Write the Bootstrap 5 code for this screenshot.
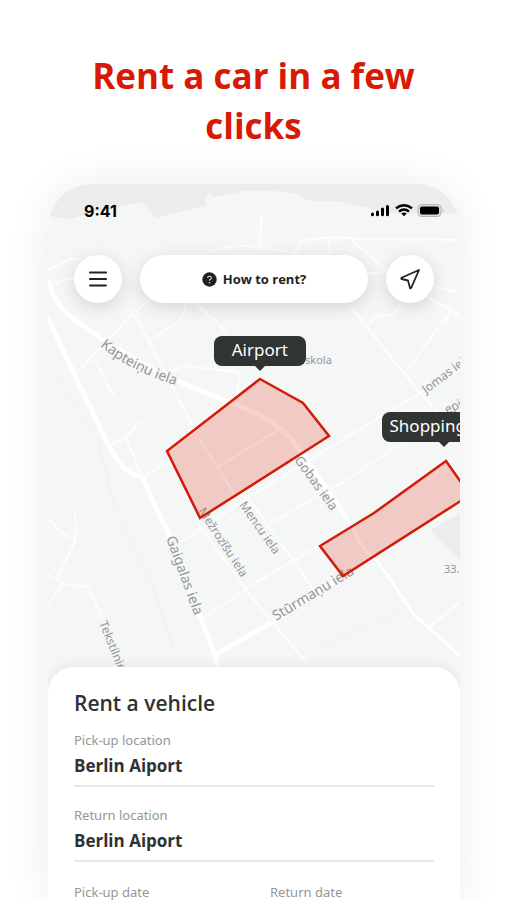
<!DOCTYPE html>
<html lang="en">
<head>
<meta charset="utf-8">
<meta name="viewport" content="width=device-width, initial-scale=1">
<title>Rent a car in a few clicks</title>
<link href="https://cdn.jsdelivr.net/npm/bootstrap@5.3.0/dist/css/bootstrap.min.css" rel="stylesheet">
<style>
  body { font-family: Lato, "Noto Sans", sans-serif; color: #2f3133; background: #fff; }
  .promo { padding: 51px 80px 33px; }
  .promo-title { color: #d71a05; font-family: "Open Sans", sans-serif; font-size: 35px; line-height: 50px; font-weight: 700; }
  .stage { padding: 0 47px 0 48px; }
  .phone { border-radius: 44px 44px 0 0; box-shadow: 0 0 44px rgba(0,0,0,.08); }
  .screen { border-radius: 44px 44px 0 0; }
  .map-area { height: 483px; }
  .map-art { top: 0; left: 0; width: 100%; height: 516px; }
  .status { padding: 16px 16px 0 36px; height: 38px; font: 700 16px/22px Inter, sans-serif; color: #000; }
  .tools { padding: 33px 26px 0; gap: 18px; }
  .float-btn { background: #fff; height: 48px; border: 0; color: #222; box-shadow: 0 4px 18px rgba(0,0,0,.14); }
  .float-btn:hover { background: #f7f7f7; }
  .round-btn { width: 48px; flex: none; }
  .help-btn { font: 700 13px/20px "Open Sans", sans-serif; gap: 6px; }
  .pin { background: #303433; color: #fff; height: 30px; line-height: 28px; border-radius: 8px; font-size: 17px; font-family: "Noto Sans", sans-serif; transform: translateX(-50%); padding: 0 8px; white-space: nowrap; }
  .pin::after { content: ""; position: absolute; left: 50%; top: 100%; margin-left: -5px; border: 5px solid transparent; border-top-color: #303433; border-bottom: 0; }
  .pin-airport { left: 51.4%; top: 152px; width: 92px; text-align: center; }
  .pin-shopping { left: 96%; top: 228px; width: 124px; }
  .sheet { border-radius: 26px 26px 0 0; padding: 22px 26px 0; box-shadow: 0 -2px 12px rgba(0,0,0,.07); background: #fff; }
  .sheet-title { font: 600 21px/28px "Open Sans", sans-serif; margin-bottom: 13px; }
  .field-label { font: 400 13px/20px "Noto Sans", sans-serif; color: #92959b; }
  .field-value { font: 700 17px/24px "Open Sans", sans-serif; color: #2f3133; border: 0; border-bottom: 2px solid #e6e7e7; border-radius: 0; padding: 4px 0 7px; }
  .field { margin-bottom: 18px; }
  .date-row { gap: 32px; padding-top: 2px; }
</style>
<script src="https://cdn.jsdelivr.net/npm/bootstrap@5.3.0/dist/js/bootstrap.bundle.min.js"></script>
</head>
<body>
<div class="d-flex flex-column min-vh-100">
  <header class="promo text-center">
    <h1 class="promo-title mb-0">Rent a car in a few clicks</h1>
  </header>
  <main class="stage flex-grow-1 d-flex flex-column">
    <div class="phone flex-grow-1 d-flex flex-column">
      <div class="screen flex-grow-1 d-flex flex-column position-relative overflow-hidden">
        <section class="map-area" aria-label="Map">
          <svg class="map-art position-absolute" viewBox="48 184 412 516" preserveAspectRatio="xMidYMin slice" aria-hidden="true">
            <path fill="#f5f6f6" d="M0 184h507v516H0z"/>
            <path fill="#ececec" d="M0 184H507V214H445L386 213C370 208 360 206 346 203C336 200 332 203 326 201C312 202 307 201 300 196C290 190 270 191 244 191L215 197L209 192L205 202L207 205L156 218L142 202L90 213L70 219L48 216H0z"/>
            <path fill="#eceeee" d="M430 530L460 513V560z"/>
            <g fill="none" stroke="#fff" stroke-width="2" stroke-linejoin="round" stroke-linecap="round">
              <path stroke-width="5" d="M48 282C54 300 62 311 72 318L98 336Q145 368 180 382L225 401C260 412 282 428 292 440L345 515M48 318L75 376L109 446C119 466 130 475 142 477C150 490 150 500 165 525L215 655L225 700M215 655L262 628L347 574"/>
              <path stroke-width="3" d="M345 515L363 548L378 562L415 616L428 627L460 656"/>
              <path stroke="#fcfdfd" d="M48 270L72 258L88 262M48 285L78 277M75 375L133 313L150 300M133 313L149 341L192 425M149 341L181 320L188 300M90 360C102 362 103 385 115 396M109 445L126 438L139 422M126 438L142 477L168 462M168 373L184 366L240 372L237 395M195 303L220 325L237 350M262 215L259 245M210 252Q240 240 285 252M295 254L302 241Q330 235 360 239L460 240M329 240L330 255M352 240L386 270M362 275L386 271M350 306L420 393L440 415M366 326L378 316L395 314L402 302M407 370L450 312L460 317M430 285L460 293M425 296L458 314M450 311L445 325M180 543L252 495L420 393L460 370M204 618L254 584L320 545M262 528L345 481L420 431M195 520L254 600L310 667M250 500L300 570L320 600M428 628L460 602M48 518L60 531L75 541M75 513Q77 530 75 542L57 577M48 574C65 588 75 585 89 587L102 619M62 585L48 606"/>
              <path d="M200 440L235 495M218 467L278 430"/>
              <path stroke="#eff0f1" stroke-width="1" d="M55 375L98 440L115 508L150 580L180 665M310 650L402 612"/>
            </g>
            <g fill="#949697" stroke="#f5f6f6" stroke-width="2" paint-order="stroke" font-family="Noto Sans, sans-serif" font-size="13">
              <path id="street-kapteinu" fill="none" stroke="none" d="M100 346Q132 373 185 388"/>
              <text font-size="14"><textPath href="#street-kapteinu">Kapteiņu iela</textPath></text>
              <text transform="translate(166 538) rotate(70)" font-size="14">Gaigalas iela</text>
              <text transform="translate(198 511) rotate(57)" font-size="12">Mežrozīšu iela</text>
              <text transform="translate(239 505) rotate(55)" font-size="12">Mencu iela</text>
              <text transform="translate(294 460) rotate(54)">Gobas iela</text>
              <text transform="translate(276 621) rotate(-31)" font-size="14">Stūrmaņu iela</text>
              <text transform="translate(99 623) rotate(68)" font-size="12">Tekstilnie</text>
              <text transform="translate(426 394) rotate(-37)" font-size="12">Jomas iela</text>
              <text transform="translate(447 414) rotate(-25)" font-size="12">epi</text>
              <text x="305" y="364" font-size="11">skola</text>
              <text x="444" y="573" font-size="11">33.</text>
            </g>
            <g fill="#e85445" fill-opacity=".27" stroke="#d31c08" stroke-width="2.5">
              <path d="M260 379L303 403L329 436L200 518L167 451z"/>
              <path d="M446 461L374 513L320 546L343 576L470 495z"/>
            </g>
          </svg>
          <div class="status position-relative d-flex justify-content-between">
            <span>9:41</span>
            <svg width="76" height="20" viewBox="0 -2 76 20" aria-hidden="true">
              <path stroke="#000" stroke-width="3" stroke-linecap="round" d="M4.500 12v.8M9.500 10v2.800M14.500 7v5.800M19.500 4.500v8.300"/>
              <g fill="none" stroke="#000" stroke-width="2.400"><path d="M28 6.300Q36 0 44 6.300M31 9.500Q36 5.500 41 9.500"/></g>
              <path d="M33.300 11.400Q36 9.600 38.700 11.400L36 14.200z"/>
              <rect x="50" y="2.500" width="23" height="12" rx="3.500" fill="#ddd" stroke="#b5b5b5"/>
              <rect x="52" y="4.500" width="19" height="8" rx="2"/>
              <path fill="#b5b5b5" d="M74.500 6.500q2 2 0 4z"/>
            </svg>
          </div>
          <div class="tools position-relative d-flex">
            <button type="button" class="btn float-btn round-btn rounded-circle p-0 d-flex align-items-center justify-content-center" aria-label="Menu">
              <svg width="20" height="20" viewBox="0 0 20 20" fill="none" stroke="currentColor" stroke-width="2" stroke-linecap="round"><path d="M2 3.500h16M2 10h16M2 16.500h16"/></svg>
            </button>
            <button type="button" class="btn float-btn help-btn rounded-pill flex-grow-1 p-0 d-flex align-items-center justify-content-center">
              <svg width="15" height="15" viewBox="0 0 15 15"><circle cx="7.500" cy="7.500" r="7.200" fill="#202020"/><path d="M5.600 6Q5.600 4.200 7.500 4.200T9.400 5.900Q9.400 6.700 8.400 7.200T7.500 8.700" fill="none" stroke="#ddd" stroke-width="1.100"/><circle cx="7.500" cy="10.700" r=".8" fill="#ddd"/></svg>
              <span>How to rent?</span>
            </button>
            <button type="button" class="btn float-btn round-btn rounded-circle p-0 d-flex align-items-center justify-content-center" aria-label="My location">
              <svg width="22" height="22" viewBox="0 0 22 22" fill="none" stroke="currentColor" stroke-width="1.800" stroke-linejoin="round"><path d="M20 2L2.500 9.800Q2 10.500 2.500 11L9 12.500L11 20Q11.600 20.600 12.200 19.800z"/></svg>
            </button>
          </div>
          <div class="pin pin-airport position-absolute">Airport</div>
          <div class="pin pin-shopping position-absolute">Shopping</div>
        </section>
        <form class="sheet flex-grow-1 position-relative">
          <h2 class="sheet-title">Rent a vehicle</h2>
          <div class="field">
            <label class="field-label d-block" for="pickup">Pick-up location</label>
            <input class="form-control field-value" id="pickup" type="text" value="Berlin Aiport">
          </div>
          <div class="field">
            <label class="field-label d-block" for="return">Return location</label>
            <input class="form-control field-value" id="return" type="text" value="Berlin Aiport">
          </div>
          <div class="date-row field-label d-flex">
            <div class="w-50">Pick-up date</div>
            <div class="w-50">Return date</div>
          </div>
        </form>
      </div>
    </div>
  </main>
</div>
</body>
</html>
